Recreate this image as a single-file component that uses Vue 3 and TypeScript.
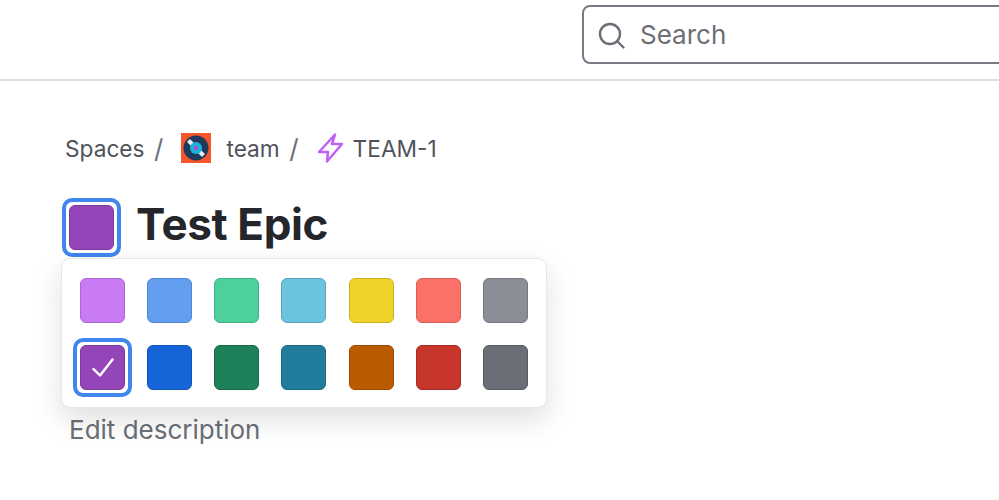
<script setup lang="ts">
const colors = [
  { bg: '#c97bf4', edge: '#ad66d6' },
  { bg: '#649ef1', edge: '#5285d2' },
  { bg: '#4dd09b', edge: '#3fb083' },
  { bg: '#6bc3de', edge: '#58a5be' },
  { bg: '#eed32a', edge: '#cbb21d' },
  { bg: '#fb7168', edge: '#d85f57' },
  { bg: '#8b8e96', edge: '#75777f' },
  { bg: '#9446b9', edge: '#7d3a9d', selected: true },
  { bg: '#1565d8', edge: '#1054b6' },
  { bg: '#1e8159', edge: '#186b49' },
  { bg: '#217d9b', edge: '#1a6882' },
  { bg: '#bb5b00', edge: '#9c4b00' },
  { bg: '#c7352b', edge: '#a72a22' },
  { bg: '#6b6e76', edge: '#585a62' },
]
</script>

<template>
  <div class="page">
    <header class="topbar">
      <div class="search">
        <svg class="search-icon" viewBox="0 0 28 28" fill="none" stroke="#6b6f76" stroke-width="2.4" stroke-linecap="round">
          <circle cx="12" cy="12" r="10" />
          <path d="M19.5 19.5l6 6" />
        </svg>
        <span>Search</span>
      </div>
    </header>

    <main class="content">
      <nav class="crumbs">
        <span>Spaces</span>
        <span class="sep">/</span>
        <svg class="team-icon" viewBox="0 0 30 30">
          <rect width="30" height="30" fill="#f4552b" />
          <circle cx="15" cy="15" r="12.5" fill="#1f3a5c" />
          <path d="M7.5 7.5l15 15" stroke="#e8eef2" stroke-width="4" />
          <circle cx="15" cy="15" r="6" fill="#19b5d8" />
          <circle cx="15" cy="15" r="2.2" fill="#b04fd0" />
        </svg>
        <span>team</span>
        <span class="sep">/</span>
        <svg class="bolt" viewBox="0 0 26 30" fill="none" stroke="#c061f5" stroke-width="2.5" stroke-linejoin="round">
          <path d="M18 1.5L2 19h9l-1 9.5L25 11H15z" />
        </svg>
        <span class="key">TEAM-1</span>
      </nav>

      <div class="title-row">
        <button class="swatch-ring">
          <span class="swatch trigger"></span>
        </button>
        <h1>Test Epic</h1>

        <div class="popover">
          <div
            v-for="c in colors"
            :key="c.bg"
            class="cell"
            :class="{ selected: c.selected }"
          >
            <span class="swatch" :style="{ background: c.bg, borderColor: c.edge }">
              <svg v-if="c.selected" class="check" viewBox="0 0 22 19" fill="none" stroke="#fff" stroke-width="2.4" stroke-linecap="round" stroke-linejoin="round">
                <path d="M1.5 11l6.5 6.5L20.5 1.5" />
              </svg>
            </span>
          </div>
        </div>
      </div>

      <div class="description">Edit description</div>
    </main>
  </div>
</template>

<style scoped>
.page {
  width: 999px;
  height: 500px;
  overflow: hidden;
  background: #fff;
  font-family: Inter, "Liberation Sans", sans-serif;
}

.topbar {
  height: 81px;
  box-sizing: border-box;
  border-bottom: 2px solid #dfe0e3;
  padding: 5px 0 0 582px;
  overflow: hidden;
}

.search {
  width: 440px;
  height: 59px;
  box-sizing: border-box;
  border: 2px solid #777b85;
  border-radius: 8px;
  display: flex;
  align-items: center;
  gap: 14px;
  padding-left: 14px;
  color: #6b6f76;
  font-size: 26px;
}

.search-icon {
  width: 28px;
  height: 28px;
  margin-top: 3px;
}

.content {
  padding: 52px 0 0 62px;
}

.crumbs {
  display: flex;
  align-items: center;
  height: 30px;
  padding-left: 3px;
  font-size: 22.7px;
  color: #50535b;
}

.sep {
  margin: 0 18px 0 9.5px;
  font-size: 26px;
  color: #6b6f76;
}

.team-icon {
  width: 30px;
  height: 30px;
  margin-right: 15px;
}

.bolt {
  width: 26px;
  height: 30px;
  margin-right: 10px;
}

.title-row {
  position: relative;
  display: flex;
  align-items: center;
  gap: 15px;
  margin-top: 35px;
}

h1 {
  margin: 0 0 6px;
  font-size: 44px;
  line-height: 51px;
  font-weight: 700;
  letter-spacing: -0.4px;
  color: #24262b;
}

.swatch-ring {
  width: 59px;
  height: 59px;
  box-sizing: border-box;
  border: 4px solid #3f86ed;
  border-radius: 10px;
  padding: 0;
  background: #fff;
  display: flex;
  align-items: center;
  justify-content: center;
}

.swatch {
  width: 45px;
  height: 45px;
  box-sizing: border-box;
  border: 1.5px solid;
  border-radius: 6px;
  display: flex;
  align-items: center;
  justify-content: center;
}

.trigger {
  background: #9446b9;
  border-color: #7d3a9d;
}

.popover {
  position: absolute;
  left: -1px;
  top: 60px;
  width: 486px;
  height: 150px;
  box-sizing: border-box;
  padding: 12px 11px;
  background: #fff;
  border: 1px solid #e6e7e9;
  border-radius: 9px;
  box-shadow: 0 12px 28px rgba(30, 32, 40, 0.14);
  display: grid;
  grid-template-columns: repeat(7, 59px);
  grid-auto-rows: 59px;
  column-gap: 8.15px;
  row-gap: 8px;
  z-index: 2;
}

.cell {
  box-sizing: border-box;
  border: 4px solid transparent;
  border-radius: 10px;
  display: flex;
  align-items: center;
  justify-content: center;
}

.cell.selected {
  border-color: #3f86ed;
}

.check {
  width: 22px;
  height: 19px;
}

.description {
  margin-top: 157px;
  padding-left: 7px;
  font-size: 26px;
  color: #6b6f76;
}
</style>
